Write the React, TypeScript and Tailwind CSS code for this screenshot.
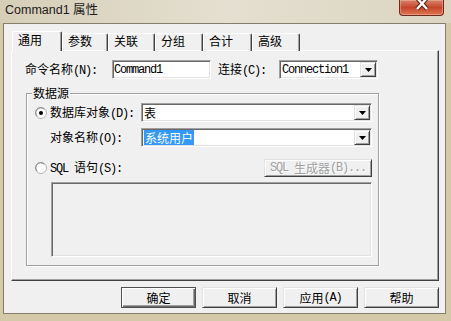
import type { ReactNode } from 'react';

const sunken =
  'border border-t-[#a0a0a0] border-l-[#a0a0a0] border-r-white border-b-white shadow-[inset_1px_1px_0_#696969,inset_-1px_-1px_0_#e3e3e3]';
const raised =
  'border border-t-[#e3e3e3] border-l-[#e3e3e3] border-r-[#404040] border-b-[#404040] shadow-[inset_1px_1px_0_#fff,inset_-1px_-1px_0_#a0a0a0]';

// ASCII runs get the narrow mono face, the rest stays CJK
function T({ s }: { s: string }) {
  const parts = s.match(/[\x20-\x7e]+|[^\x20-\x7e]+/g) ?? [];
  return (
    <>
      {parts.map((p, i) =>
        /^[\x20-\x7e]+$/.test(p) ? (
          <span key={i} className="font-['Liberation_Mono',monospace] text-[12px] tracking-[-1.2px] whitespace-pre">
            {p}
          </span>
        ) : (
          <span key={i}>{p}</span>
        )
      )}
    </>
  );
}

function Radio({ checked }: { checked?: boolean }) {
  return (
    <svg width="12" height="12" viewBox="0 0 12 12" className="shrink-0">
      <circle cx="6" cy="6" r="5.5" fill="#fff" stroke="#b4b4b4" />
      <path d="M2.2 9.2A4.6 4.6 0 0 1 9.2 2.2" fill="none" stroke="#808080" />
      {checked && <circle cx="6" cy="6" r="2" fill="#000" />}
    </svg>
  );
}

function Combo({ className, children }: { className: string; children: ReactNode }) {
  return (
    <div className={`${className} h-[19px] flex bg-white p-[1px] ${sunken}`}>
      <div className="flex-1 flex items-center pl-[1px] overflow-hidden whitespace-nowrap">{children}</div>
      <div className={`w-[16px] h-full flex items-center justify-center bg-[#f0f0f0] ${raised}`}>
        <svg width="7" height="4" viewBox="0 0 7 4">
          <path d="M0 0h7L3.5 4z" fill="#000" />
        </svg>
      </div>
    </div>
  );
}

const tabs = [
  { label: '参数', w: 'w-[46px]' },
  { label: '关联', w: 'w-[47px]' },
  { label: '分组', w: 'w-[48px]' },
  { label: '合计', w: 'w-[49px]' },
  { label: '高级', w: 'w-[48px]' },
];

const buttons = ['确定', '取消', '应用(A)', '帮助'];

export default function App() {
  return (
    <div className="w-[451px] h-[321px] overflow-hidden bg-[#d4caa9] font-['Noto_Sans_CJK_SC',sans-serif] text-[12px] leading-none text-black select-none">
      {/* title bar */}
      <div className="h-[23px] flex items-start bg-linear-to-r from-[#d6ceb7] via-[#e5dfd1] to-[#dcd5c2]">
        <div className="pl-[5px] pt-[3px] font-['Liberation_Sans','Noto_Sans_CJK_SC',sans-serif] text-[12.5px] leading-[14px] text-[#1c1c1c]">
          Command1 属性
        </div>
        <div className="ml-auto mr-[7px] w-[45px] h-[16px] flex justify-center rounded-b-[4px] border border-t-0 border-[#6e2b1c] bg-linear-to-b from-[#d9826c] via-[#c5452a] to-[#de7652] shadow-[inset_0_0_0_1px_rgba(255,220,200,0.35)]">
          <svg width="14" height="11" viewBox="0 0 14 11">
            <path d="M2 -2L12 9M12 -2L2 9" stroke="#5a2418" strokeWidth="4.4" />
            <path d="M2 -2L12 9M12 -2L2 9" stroke="#fff" strokeWidth="2.4" />
          </svg>
        </div>
      </div>

      {/* client area */}
      <div className="ml-[3px] w-[443px] h-[291px] border border-[#857e6b] bg-[#f0f0f0]">
        <div className="pl-[7px] pt-[7px]">
          {/* tab strip */}
          <div className="flex items-end h-[20px] pl-[1px]">
            <div className="relative z-10 w-[50px] h-[20px] pl-[5px] pt-[2px] leading-[12px] bg-[#f0f0f0] rounded-t-[2px] border-l border-t border-r border-l-white border-t-white border-r-[#404040] shadow-[inset_-1px_0_0_#a0a0a0]">
              通用
            </div>
            {tabs.map((t) => (
              <div
                key={t.label}
                className={`${t.w} h-[18px] pl-[5px] pt-[1px] leading-[12px] rounded-t-[2px] border-l border-t border-r border-l-white border-t-white border-r-[#404040] shadow-[inset_-1px_0_0_#a0a0a0]`}
              >
                {t.label}
              </div>
            ))}
          </div>

          {/* tab page */}
          <div className="-mt-[1px] w-[428px] h-[231px] border border-t-white border-l-white border-r-[#404040] border-b-[#404040] shadow-[inset_-1px_-1px_0_#a0a0a0]">
            <div className="flex items-center mt-[9px] ml-[13px] h-[19px]">
              <span className="w-[87px] whitespace-nowrap">
                <T s="命令名称(N):" />
              </span>
              <div className={`w-[99px] h-[19px] bg-white flex items-center pl-[1px] ${sunken}`}>
                <T s="Command1" />
              </div>
              <span className="ml-[7px] w-[61px] whitespace-nowrap">
                <T s="连接(C):" />
              </span>
              <Combo className="w-[99px]">
                <T s="Connection1" />
              </Combo>
            </div>

            {/* 数据源 group */}
            <div className="relative mt-[14px] ml-[14px] w-[353px] h-[173px] border border-[#a0a0a0] shadow-[inset_1px_1px_0_#fff,1px_1px_0_#fff] pl-[8px] pr-[6px] pt-[9px]">
              <span className="absolute -top-[7px] left-[5px] px-[1px] bg-[#f0f0f0] leading-[12px]">数据源</span>

              <div className="flex items-center h-[19px]">
                <Radio checked />
                <span className="ml-[3px] w-[91px] whitespace-nowrap">
                  <T s="数据库对象(D):" />
                </span>
                <Combo className="w-[231px]">
                  <T s="表" />
                </Combo>
              </div>

              <div className="mt-[6px] flex items-center h-[19px] pl-[15px]">
                <span className="w-[91px] whitespace-nowrap">
                  <T s="对象名称(O):" />
                </span>
                <Combo className="w-[231px]">
                  <span className="h-full flex items-center px-[1px] bg-[#3399ff] text-white">系统用户</span>
                </Combo>
              </div>

              <div className="mt-[12px] flex items-center h-[18px]">
                <Radio />
                <span className="ml-[3px] whitespace-nowrap">
                  <T s="SQL 语句(S):" />
                </span>
                <div
                  className={`ml-auto w-[108px] h-[18px] flex items-center justify-center whitespace-nowrap bg-[#f0f0f0] text-[#a0a0a0] [text-shadow:1px_1px_0_#fff] ${raised}`}
                >
                  <T s="SQL 生成器(B)..." />
                </div>
              </div>

              <div className={`mt-[5px] ml-[16px] w-[321px] h-[75px] bg-[#f0f0f0] ${sunken}`} />
            </div>
          </div>

          {/* dialog buttons */}
          <div className="mt-[6px] w-[428px] flex justify-end gap-[6px]">
            {buttons.map((b, i) => (
              <div
                key={b}
                className={
                  i === 0
                    ? 'w-[75px] h-[21px] flex items-center justify-center whitespace-nowrap border border-[#505050] shadow-[inset_1px_1px_0_#fff,inset_-1px_-1px_0_#696969,inset_-2px_-2px_0_#a0a0a0]'
                    : `w-[75px] h-[21px] flex items-center justify-center whitespace-nowrap ${raised}`
                }
              >
                <T s={b} />
              </div>
            ))}
          </div>
        </div>
      </div>
    </div>
  );
}
